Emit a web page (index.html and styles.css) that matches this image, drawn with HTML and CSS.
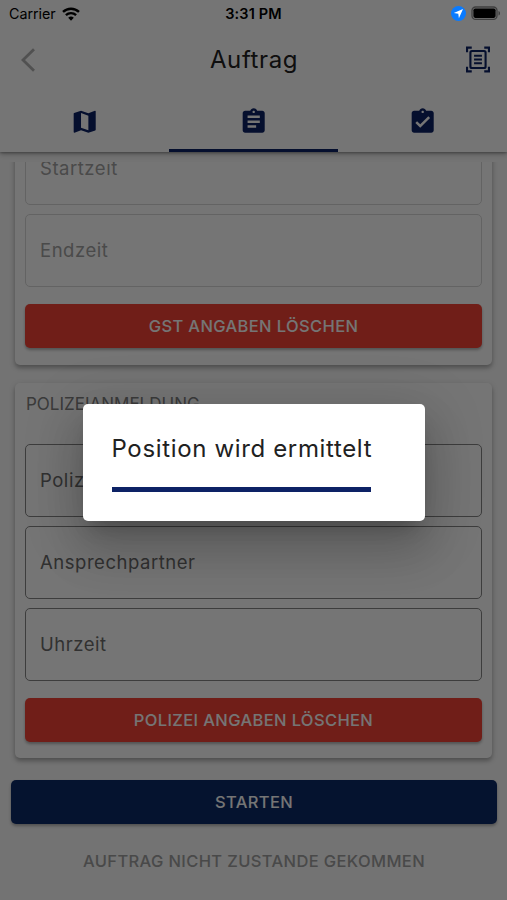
FILE: index.html
```
<!DOCTYPE html>
<html lang="de">
<head>
<meta charset="utf-8">
<title>Auftrag</title>
<link rel="stylesheet" href="styles.css">
</head>
<body>
<div class="screen">
  <header class="header">
    <div class="status">
      <div class="status-left"><span class="carrier">Carrier</span>
        <svg class="wifi" viewBox="0 0 18 14"><path d="M9 13.7 6.2 10.8a4 4 0 0 1 5.6 0z"/><path class="arc" d="M1 4.9a11.6 11.6 0 0 1 16 0M3.9 8.2a7.4 7.4 0 0 1 10.2 0"/></svg>
      </div>
      <span class="clock">3:31 PM</span>
      <div class="status-right">
        <svg class="location" viewBox="0 0 15 15"><circle cx="7.5" cy="7.5" r="7.5"/><path d="M12 3 2.8 7.1l4.5.6.6 4.5z"/></svg>
        <svg class="battery" viewBox="0 0 30 15"><rect class="shell" x="1" y="1" width="25" height="12.4" rx="3.6"/><rect x="2.4" y="2.5" width="22.2" height="9.4" rx="1.8"/><path class="cap" d="M27.5 5c2 .6 2 4 0 4.6z"/></svg>
      </div>
    </div>
    <div class="appbar">
      <svg class="back" viewBox="0 0 16 24"><path d="M14 1.2 3 12l11 10.8"/></svg>
      <h1 class="title">Auftrag</h1>
      <svg class="scan" viewBox="0 0 25 27"><path d="M1.1 6V1.1H6M19 1.1h4.9V6M23.9 21v4.9H19M6 25.9H1.1V21"/><rect x="4.6" y="4.6" width="15.8" height="17.8" rx="1.6"/><path class="lines" d="M8.4 9.6h8.2M8.4 13.5h8.2M8.4 17.4h8.2"/></svg>
    </div>
    <nav class="tabs">
      <div class="tab"><svg viewBox="0 0 24 24"><path d="M20.5 3l-.16.03L15 5.1 9 3 3.36 4.9c-.21.07-.36.25-.36.48V20.5c0 .28.22.5.5.5l.16-.03L9 18.9l6 2.1 5.64-1.9c.21-.07.36-.25.36-.48V3.5c0-.28-.22-.5-.5-.5zM15 19l-6-2.11V5l6 2.11V19z"/></svg></div>
      <div class="tab active"><svg viewBox="0 0 24 24"><path d="M19 3h-4.18C14.4 1.84 13.3 1 12 1c-1.3 0-2.4.84-2.82 2H5c-1.1 0-2 .9-2 2v14c0 1.1.9 2 2 2h14c1.1 0 2-.9 2-2V5c0-1.1-.9-2-2-2zm-7 0c.55 0 1 .45 1 1s-.45 1-1 1-1-.45-1-1 .45-1 1-1zm2 14H7v-2h7v2zm3-4H7v-2h10v2zm0-4H7V7h10v2z"/></svg></div>
      <div class="tab"><svg viewBox="0 0 24 24"><path d="M19 3h-4.18C14.4 1.84 13.3 1 12 1c-1.3 0-2.4.84-2.82 2H5c-1.1 0-2 .9-2 2v14c0 1.1.9 2 2 2h14c1.1 0 2-.9 2-2V5c0-1.1-.9-2-2-2zm-7 0c.55 0 1 .45 1 1s-.45 1-1 1-1-.45-1-1 .45-1 1-1zm-2 14l-4-4 1.41-1.41L10 14.17l6.59-6.59L18 9l-8 8z"/></svg></div>
    </nav>
  </header>
  <main class="content">
    <section class="card card-gst">
      <div class="field disabled"><span class="startzeit">Startzeit</span></div>
      <div class="field disabled"><span>Endzeit</span></div>
      <div class="button red"><span>GST ANGABEN LÖSCHEN</span></div>
    </section>
    <section class="card card-police">
      <h2 class="section-title">POLIZEIANMELDUNG</h2>
      <div class="field"><span>Polizei</span></div>
      <div class="field"><span>Ansprechpartner</span></div>
      <div class="field"><span>Uhrzeit</span></div>
      <div class="button red"><span>POLIZEI ANGABEN LÖSCHEN</span></div>
    </section>
  </main>
  <footer class="actions">
    <div class="button navy"><span>STARTEN</span></div>
    <div class="text-button"><span>AUFTRAG NICHT ZUSTANDE GEKOMMEN</span></div>
  </footer>
  <div class="scrim">
    <div class="dialog">
      <div class="dialog-title">Position wird ermittelt</div>
      <div class="progress"></div>
    </div>
  </div>
</div>
</body>
</html>
```
FILE: styles.css
```
* { box-sizing: border-box; }
body { margin: 0; font-family: Inter, "Liberation Sans", sans-serif; }
h1, h2 { margin: 0; font-weight: 400; }
svg { display: block; flex: none; }
span { white-space: nowrap; }

.screen { position: relative; width: 507px; height: 900px; overflow: hidden; background: #fafafa; display: flex; flex-direction: column; }
.header { height: 152px; flex: none; background: #fff; box-shadow: 0 2px 5px rgba(0,0,0,.3), 0 1px 2px rgba(0,0,0,.22); }

.status { height: 27px; display: grid; grid-template-columns: 1fr auto 1fr; align-items: center; padding: 0 8px 0 9px; }
.status-left { display: flex; align-items: center; gap: 6px; }
.carrier { font-size: 14.3px; letter-spacing: -.02px; }
.wifi { width: 18px; height: 14px; }
.wifi .arc { fill: none; stroke: #000; stroke-width: 2.4; }
.clock { font-size: 14.5px; font-weight: 600; letter-spacing: .15px; margin-right: 1px; }
.status-right { display: flex; align-items: center; justify-content: flex-end; gap: 5px; margin-right: -2px; }
.location { position: relative; z-index: 3; width: 15px; height: 15px; fill: #0a7bff; }
.location path { fill: #fff; }
.battery { width: 30px; height: 15px; }
.battery .shell { fill: none; stroke: #888; stroke-width: 1.3; }
.battery .cap { fill: #888; }

.appbar { height: 68px; display: grid; grid-template-columns: 1fr auto 1fr; align-items: center; padding: 0 17px 3px 20px; }
.back { width: 16px; height: 24px; fill: none; stroke: #b0b0b0; stroke-width: 2.8; }
.title { font-size: 24px; line-height: 28px; color: #212121; letter-spacing: .6px; margin-left: -2px; }
.scan { width: 24px; height: 27px; justify-self: end; fill: none; stroke: #0d2265; stroke-width: 2.2; }
.scan .lines { stroke-width: 2; }

.tabs { height: 57px; display: flex; }
.tab { flex: 1; display: flex; align-items: center; justify-content: center; border-bottom: 3px solid transparent; }
.tab svg { width: 29.4px; height: 29.4px; fill: #0d2265; }
.tab.active { border-bottom-color: #0d2265; }

.content { height: 610px; flex: none; margin-top: 10px; padding: 0 15px; overflow: hidden; }
.card { background: #fff; border-radius: 5px; padding: 0 10px; box-shadow: 0 3px 4px rgba(0,0,0,.24), 0 2px 7px rgba(0,0,0,.12); }
.card-gst { height: 233px; margin-top: -30px; }
.card-police { height: 375px; margin-top: 18px; }
.section-title { height: 61px; padding: 11px 0 0 1px; font-size: 17px; line-height: 20px; letter-spacing: 0; color: #808080; }
.field { height: 73px; margin-bottom: 9px; border: 1.5px solid #868686; border-radius: 5px; display: flex; align-items: center; padding: 0 0 2px 14px; font-size: 18.5px; color: #6c6c6c; letter-spacing: .53px; }
.field.disabled { border-color: #d8d8d8; color: #a2a2a2; }

.button { height: 44px; border-radius: 5px; display: flex; align-items: center; justify-content: center; font-size: 16.5px; font-weight: 500; letter-spacing: .37px; color: #fff; box-shadow: 0 2px 3px rgba(0,0,0,.3); padding-bottom: 1px; }
.card .button { margin-top: 17px; }
.red { background: #f44336; }
.navy { background: #0d2a68; }
.actions { padding: 8px 10px 0 11px; }
.text-button { height: 73px; display: flex; align-items: center; justify-content: center; font-size: 16.5px; font-weight: 500; letter-spacing: .37px; color: #a0a0a0; }

.scrim { position: absolute; inset: 0; z-index: 2; background: rgba(0,0,0,.54); display: flex; align-items: center; justify-content: center; padding-top: 25px; }
.dialog { width: 342px; height: 117px; padding: 29px 29px 0; background: #fff; border-radius: 5px; box-shadow: 0 13px 18px -8px rgba(0,0,0,.2), 0 29px 46px 4px rgba(0,0,0,.14), 0 11px 56px 10px rgba(0,0,0,.12); }
.dialog-title { height: 32px; font-size: 24px; line-height: 32px; letter-spacing: .65px; color: #212121; white-space: nowrap; }
.progress { width: 259px; height: 5px; margin-top: 22px; background: #0d2265; }
```
